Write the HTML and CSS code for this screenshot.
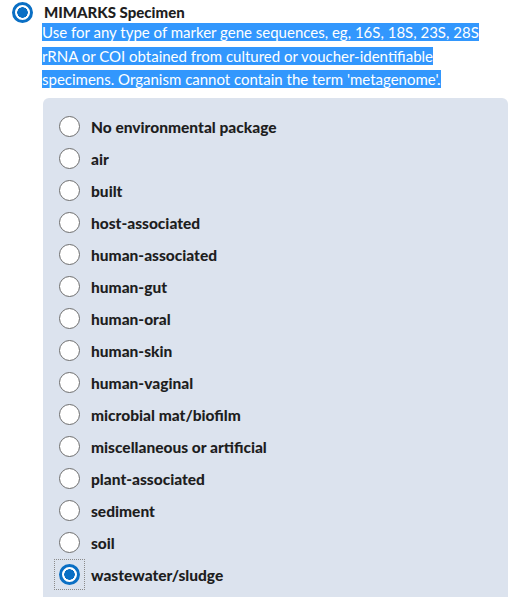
FILE: index.html
```html
<!DOCTYPE html>
<html lang="en">
<head>
  <meta charset="UTF-8" />
  <title>Package selection</title>
  <link rel="stylesheet" href="styles.css">
</head>
<body>
  <div class="package">
    <label class="package-head">
      <input type="radio" name="package" class="radio" checked />
      <span class="package-title">MIMARKS Specimen</span>
    </label>
    <p class="package-desc"><span class="sel">Use for any type of marker gene sequences, eg, 16S, 18S, 23S, 28S rRNA or COI obtained from cultured or voucher-identifiable specimens. Organism cannot contain the term 'metagenome'.</span></p>

    <div class="env-panel">
      <label class="env"><input type="radio" name="env" class="radio" /><span>No environmental package</span></label>
      <label class="env"><input type="radio" name="env" class="radio" /><span>air</span></label>
      <label class="env"><input type="radio" name="env" class="radio" /><span>built</span></label>
      <label class="env"><input type="radio" name="env" class="radio" /><span>host-associated</span></label>
      <label class="env"><input type="radio" name="env" class="radio" /><span>human-associated</span></label>
      <label class="env"><input type="radio" name="env" class="radio" /><span>human-gut</span></label>
      <label class="env"><input type="radio" name="env" class="radio" /><span>human-oral</span></label>
      <label class="env"><input type="radio" name="env" class="radio" /><span>human-skin</span></label>
      <label class="env"><input type="radio" name="env" class="radio" /><span>human-vaginal</span></label>
      <label class="env"><input type="radio" name="env" class="radio" /><span>microbial mat/biofilm</span></label>
      <label class="env"><input type="radio" name="env" class="radio" /><span>miscellaneous or artificial</span></label>
      <label class="env"><input type="radio" name="env" class="radio" /><span>plant-associated</span></label>
      <label class="env"><input type="radio" name="env" class="radio" /><span>sediment</span></label>
      <label class="env"><input type="radio" name="env" class="radio" /><span>soil</span></label>
      <label class="env"><span class="focus"><input type="radio" name="env" class="radio" checked /></span><span>wastewater/sludge</span></label>
    </div>
  </div>
</body>
</html>
```

FILE: styles.css
```css
* {
  box-sizing: border-box;
}

body {
  margin: 0;
  font-family: Lato, "Noto Sans", sans-serif;
  color: #1e1e1e;
  background: #fff;
}

.package {
  padding: 2px 14px 0 12px;
}

.package-head {
  display: flex;
  align-items: center;
  gap: 11px;
  height: 20px;
}

.package-title {
  font-weight: 900;
  font-size: 15px;
}

.package-desc {
  margin: -1px 0 6px 30px;
  font-size: 15px;
  line-height: 23.5px;
}

.sel {
  background: #3297fd;
  color: #fff;
}

.radio {
  appearance: none;
  -webkit-appearance: none;
  margin: 0;
  width: 21px;
  height: 21px;
  flex: none;
  border-radius: 50%;
  border: 1px solid #6e6e6e;
  background: #fff;
}

.radio:checked {
  border: 3px solid #0a6fc4;
  background: radial-gradient(circle, #0a6fc4 0 5px, #fff 5.5px);
}

.env-panel {
  margin-left: 31px;
  background: #dce3ee;
  border-radius: 6px 6px 0 0;
  padding: 13px 16px 6px;
}

.env {
  display: flex;
  align-items: center;
  gap: 11px;
  height: 32px;
  font-weight: 900;
  font-size: 15.5px;
}

.focus {
  display: flex;
  margin: -5px;
  padding: 4px;
  border: 1px dotted #8a8a8a;
}
```
